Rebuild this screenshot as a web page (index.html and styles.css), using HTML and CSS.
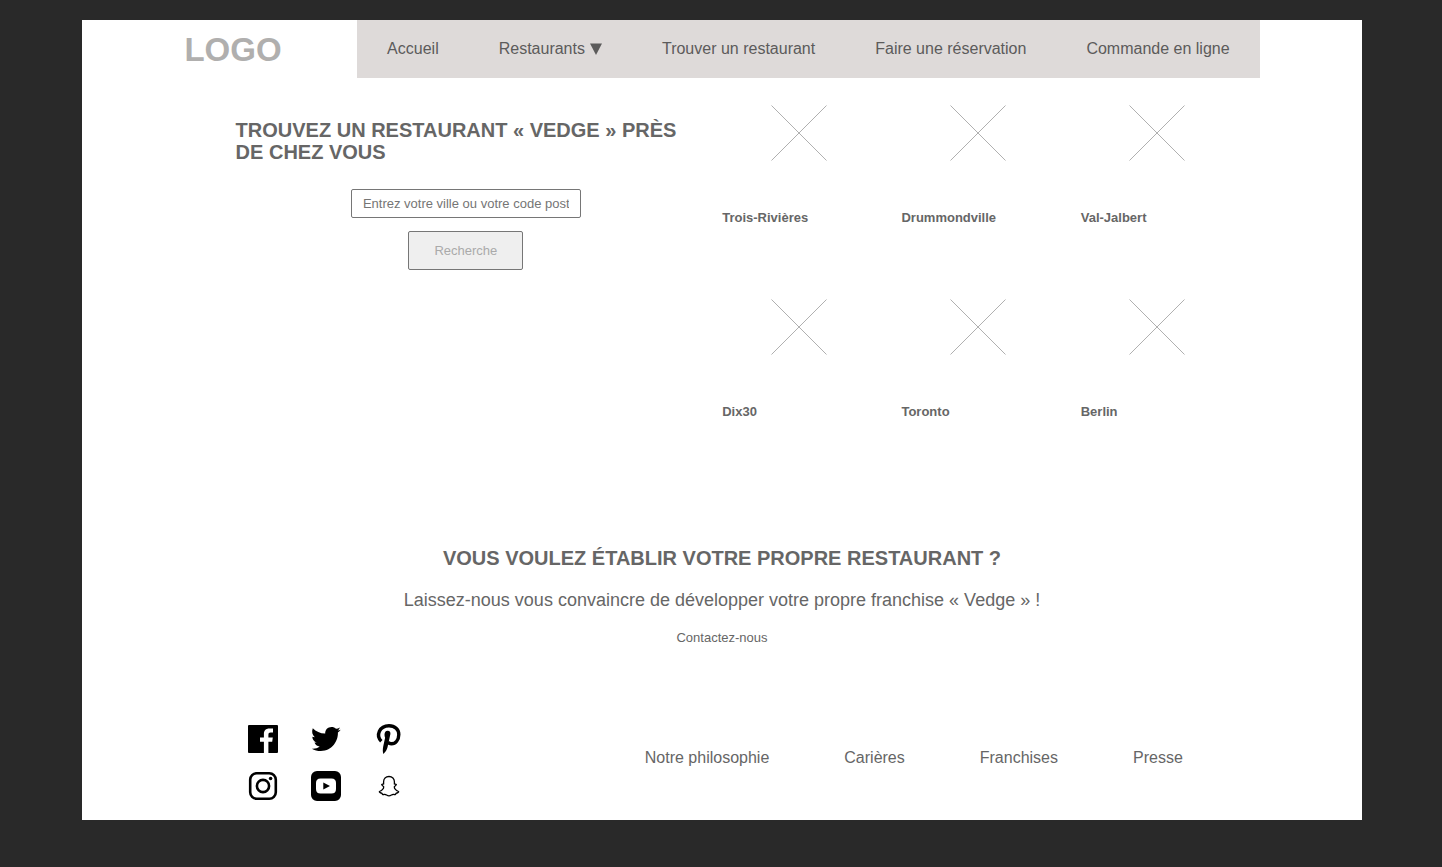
FILE: index.html
```
<!DOCTYPE html>
<html lang="fr">
<head>
<meta charset="utf-8">
<meta name="viewport" content="width=device-width, initial-scale=1">
<title>Vedge – Trouver un restaurant</title>
<link rel="stylesheet" href="styles.css">
</head>
<body>
<div class="page">
  <header class="header">
    <div class="logo">LOGO</div>
    <nav class="nav" aria-label="Navigation principale">
      <a href="#">Accueil</a>
      <a class="nav-menu" href="#">Restaurants <svg class="arrow" viewBox="0 0 12 12" aria-hidden="true"><path d="M0 .5h12L6 12z"/></svg></a>
      <a href="#">Trouver un restaurant</a>
      <a href="#">Faire une réservation</a>
      <a href="#">Commande en ligne</a>
    </nav>
  </header>

  <main>
    <div class="finder">
      <section>
        <h2 class="title">TROUVEZ UN RESTAURANT « VEDGE » PRÈS DE CHEZ VOUS</h2>
        <form class="search">
          <input class="search-input" type="text" aria-label="Ville ou code postal" placeholder="Entrez votre ville ou votre code postal">
          <button class="search-button" type="submit">Recherche</button>
        </form>
      </section>
      <ul class="places">
        <li><svg class="cross" viewBox="0 0 56 56" aria-hidden="true"><path d="M.5.5l55 55M55.5.5l-55 55"/></svg><h3>Trois-Rivières</h3></li>
        <li><svg class="cross" viewBox="0 0 56 56" aria-hidden="true"><path d="M.5.5l55 55M55.5.5l-55 55"/></svg><h3>Drummondville</h3></li>
        <li><svg class="cross" viewBox="0 0 56 56" aria-hidden="true"><path d="M.5.5l55 55M55.5.5l-55 55"/></svg><h3>Val-Jalbert</h3></li>
        <li><svg class="cross" viewBox="0 0 56 56" aria-hidden="true"><path d="M.5.5l55 55M55.5.5l-55 55"/></svg><h3>Dix30</h3></li>
        <li><svg class="cross" viewBox="0 0 56 56" aria-hidden="true"><path d="M.5.5l55 55M55.5.5l-55 55"/></svg><h3>Toronto</h3></li>
        <li><svg class="cross" viewBox="0 0 56 56" aria-hidden="true"><path d="M.5.5l55 55M55.5.5l-55 55"/></svg><h3>Berlin</h3></li>
      </ul>
    </div>

    <section class="franchise">
      <h2 class="title">VOUS VOULEZ ÉTABLIR VOTRE PROPRE RESTAURANT ?</h2>
      <p>Laissez-nous vous convaincre de développer votre propre franchise « Vedge » !</p>
      <a href="#">Contactez-nous</a>
    </section>
  </main>

  <footer class="footer">
    <div class="social">
      <a href="#" aria-label="Facebook"><svg viewBox="0 0 30 30"><path d="M1 1h28a1 1 0 0 1 1 1v26a1 1 0 0 1-1 1h-8.600V17.800h3.800l.6-4.200h-4.400v-2.800c0-1.500.7-2.200 2.200-2.200h2.400V4.500h-3.600c-3.700 0-5.500 2.100-5.500 5.500v3.600H12v4.200h3.900V29H1a1 1 0 0 1-1-1V2a1 1 0 0 1 1-1z"/></svg></a>
      <a href="#" aria-label="Twitter"><svg viewBox="0 0 30 30"><path d="M1.800 4.300C5 7.500 9.500 9.700 14.200 9.600 14 5.800 17 3 20.500 3c1.900 0 3.300.6 4.500 1.800 1.400-.2 2.600-.7 3.800-1.400-.4 1.300-1.100 2.200-2.200 3 1.100-.1 2.100-.3 3.100-.7-.8 1.200-1.700 2.100-2.800 2.900C27.300 16.500 21.500 27 9.800 27c-3.400 0-6.300-.7-9-2.300 3.100.2 5.600-.4 7.900-2.200-2.700-.3-4.400-1.600-5.200-3.900h2.300C3 17.500 1.400 15.500 1.300 12.700l2.500.6C1.300 11 .4 7.800 1.800 4.300z"/></svg></a>
      <a href="#" aria-label="Pinterest"><svg viewBox="0 0 30 30"><path class="loop" d="M7.300 17.200C1.500 11.500 5.500 1.700 15 1.700c6 0 9.800 3.800 9.800 8.800 0 5.600-3.300 9.300-7.300 9.300-1.800 0-3.200-.7-3.900-1.900"/><path d="M10.500 10.500c.1-2.400 1.100-3.800 3.200-3.800s3 1.300 2.700 3.300L13.600 23c-.6 2.800-2.400 5.300-4.200 7-.8-2.500-.7-4.900-.2-7.600l1.900-8.700c-.4-.9-.6-1.900-.6-3.200z"/></svg></a>
      <a href="#" aria-label="Instagram"><svg viewBox="0 0 30 30"><rect class="line" x="2.200" y="2.200" width="25.600" height="25.600" rx="6.500"/><circle class="line" cx="15" cy="15" r="6.100"/><circle cx="22.600" cy="7.500" r="1.800"/></svg></a>
      <a href="#" aria-label="YouTube"><svg viewBox="0 0 30 30"><path fill-rule="evenodd" d="M6 0h18a6 6 0 0 1 6 6v18a6 6 0 0 1-6 6H6a6 6 0 0 1-6-6V6a6 6 0 0 1 6-6zM9.500 7.500Q5 7.500 5 12v6q0 4.500 4.500 4.500h11q4.500 0 4.500-4.500v-6q0-4.500-4.500-4.500zM12.300 11.600v6.800l6.700-3.400z"/></svg></a>
      <a href="#" aria-label="Snapchat"><svg viewBox="0 0 30 30"><path class="thin" d="M15 5.500c-3.300 0-5.400 2.300-5.400 5.300v2.200c-.8.300-1.500 0-1.900.4-.5.800 1.600 1.400 2 2.300.2 1.900-2.200 4.200-4.300 4.800-.4.900 1.500 1.600 2.600 1.800.3.400.2 1 .6 1.200.9.200 2-.3 3.100.1 1.100.5 1.800 1.200 3.300 1.200s2.200-.7 3.300-1.200c1.100-.4 2.200.1 3.100-.1.400-.2.300-.8.600-1.200 1.100-.2 3-.9 2.600-1.800-2.100-.6-4.500-2.900-4.300-4.800.4-.9 2.500-1.500 2-2.300-.4-.4-1.100-.1-1.900-.4v-2.200c0-3-2.100-5.300-5.400-5.300z"/></svg></a>
    </div>
    <nav class="footer-nav" aria-label="Pied de page">
      <a href="#">Notre philosophie</a>
      <a href="#">Carières</a>
      <a href="#">Franchises</a>
      <a href="#">Presse</a>
    </nav>
  </footer>
</div>
</body>
</html>
```
FILE: styles.css
```
* {
  box-sizing: border-box;
}

body {
  margin: 0;
  padding: 20px 80px 20px 82px;
  background: #292929;
  color: #666;
  font: 16px/20px "Liberation Sans", Arial, sans-serif;
}

a {
  color: inherit;
  text-decoration: none;
}

h2, h3, p, ul {
  margin: 0;
  padding: 0;
}

.page {
  background: #fff;
}

.header {
  display: flex;
  justify-content: space-between;
  align-items: center;
  padding: 0 8%;
}

.logo {
  padding-top: 2px;
  color: #b0afae;
  font-size: 33px;
  font-weight: bold;
  line-height: 40px;
}

.nav {
  display: flex;
  background: #dedad9;
  color: #5c5b5b;
}

.nav a {
  padding: 19px 30px;
}

.nav-menu {
  display: flex;
  align-items: center;
  gap: 5px;
}

.arrow {
  width: 12px;
  height: 12px;
  fill: #5c5b5b;
}

.finder {
  display: grid;
  grid-template-columns: 9fr 10fr;
  column-gap: 26px;
  padding: 27px 10% 0 12%;
}

.title {
  font-size: 20px;
  line-height: 22px;
}

.finder .title {
  padding-top: 14px;
}

.search {
  display: flex;
  flex-direction: column;
  align-items: center;
  gap: 13px;
  padding-top: 26px;
}

.search-input {
  width: 230px;
  max-width: 100%;
  padding: 6px 11px;
  border: 1px solid #767676;
  border-radius: 2px;
  background: #fff;
  font: 13px/15px "Liberation Sans", Arial, sans-serif;
}

.search-input::placeholder {
  color: #757575;
}

.search-button {
  padding: 11px 25px;
  border: 1px solid #767676;
  border-radius: 2px;
  background: #efefef;
  color: #aaa;
  font: 13px/15px "Liberation Sans", Arial, sans-serif;
}

.places {
  display: grid;
  grid-template-columns: repeat(3, 1fr);
  gap: 73px 26px;
  list-style: none;
}

.cross {
  display: block;
  width: 56px;
  height: 56px;
  margin: 0 auto 49px;
  fill: none;
  stroke: #b0b0b0;
}

.places h3 {
  font-size: 13px;
  line-height: 16px;
}

.franchise {
  display: flex;
  flex-direction: column;
  align-items: center;
  padding: 127px 12% 0;
  text-align: center;
}

.franchise p {
  padding: 20px 0 19px;
  font-size: 18px;
  line-height: 22px;
}

.franchise a {
  font-size: 13px;
  line-height: 16px;
}

.footer {
  display: flex;
  justify-content: space-between;
  align-items: flex-start;
  padding: 78px 14% 19px 13%;
}

.social {
  display: grid;
  grid-template-columns: repeat(3, 30px);
  gap: 17px 33px;
}

.social svg {
  display: block;
  width: 30px;
  height: 30px;
}

.line,
.loop,
.thin {
  fill: none;
  stroke: #000;
}

.line {
  stroke-width: 2.6;
}

.loop {
  stroke-width: 3.4;
}

.thin {
  stroke-width: 1.3;
}

.footer-nav {
  display: flex;
  gap: 75px;
  padding-top: 24px;
}
```
